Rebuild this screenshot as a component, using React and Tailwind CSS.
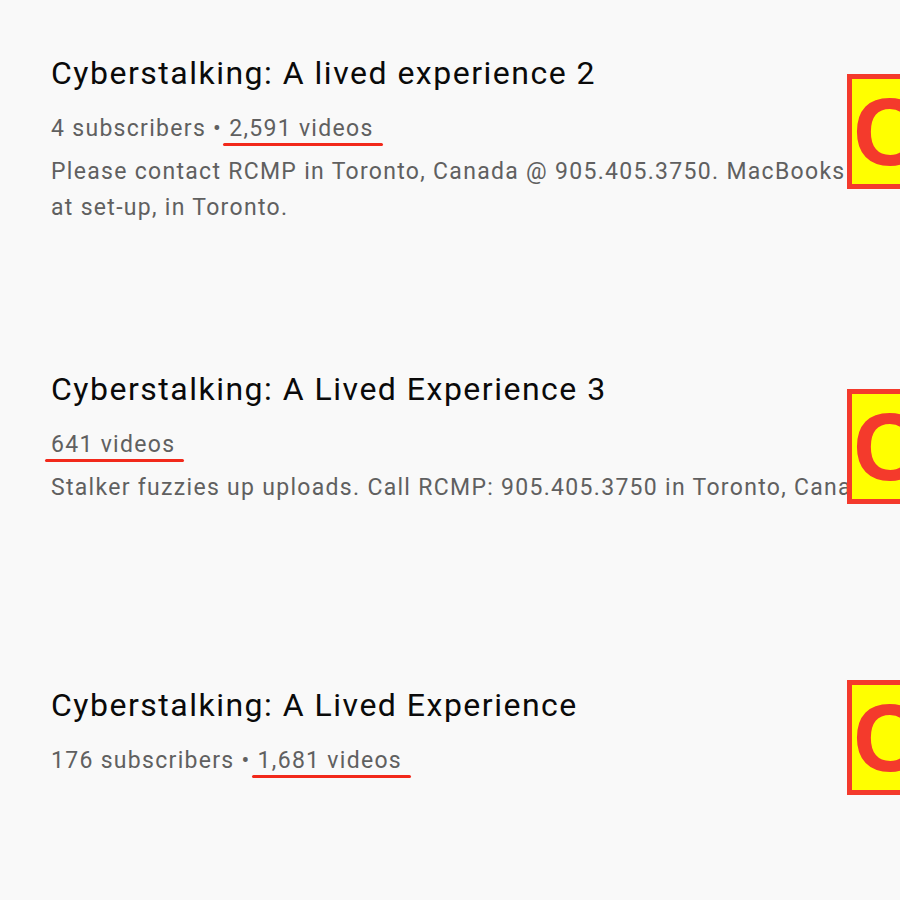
const rows = [
  {
    title: 'Cyberstalking: A lived experience 2',
    subs: '4 subscribers',
    videos: '2,591 videos',
    desc: ['Please contact RCMP in Toronto, Canada @ 905.405.3750. MacBooks', 'at set-up, in Toronto.'],
    thumbTop: 'mt-[74px]'
  },
  {
    title: 'Cyberstalking: A Lived Experience 3',
    videos: '641 videos',
    desc: ['Stalker fuzzies up uploads. Call RCMP: 905.405.3750 in Toronto, Canada'],
    thumbTop: 'mt-[73px]'
  },
  {
    title: 'Cyberstalking: A Lived Experience',
    subs: '176 subscribers',
    videos: '1,681 videos',
    desc: [],
    thumbTop: 'mt-[48px]'
  }
];

const Marked = ({ children }) => (
  <span className="relative inline-block">
    {children}
    <span className="absolute left-[-6px] right-[-9px] top-[32px] h-[3px] rounded-full bg-[#f2291b]" />
  </span>
);

const Thumb = ({ className }) => (
  <div className={`relative z-10 flex h-[115px] w-[180px] shrink-0 items-center border-[5px] border-[#f43a2c] bg-[#ffff00] pl-[1px] ${className}`}>
    <span className="font-['Liberation_Sans',Arial,sans-serif] text-[96px] font-bold leading-none text-[#f43a2c]">C</span>
  </div>
);

const App = () => {
  return (
    <div className="h-[900px] w-[900px] overflow-hidden bg-[#f9f9f9] font-['Roboto',sans-serif]">
      {rows.map((row) => (
        <div key={row.title} className="flex h-[316px] items-start">
          <div className="w-[847px] shrink-0 pl-[51px] pt-[53px]">
            <h3 className="text-[32px] leading-[40px] tracking-[1.5px] text-[#0a0a0a]">{row.title}</h3>
            <p className="mt-[18px] whitespace-nowrap text-[23px] leading-[36px] tracking-[1.3px] text-[#606060]">
              {row.subs && <span>{row.subs} • </span>}
              <Marked>{row.videos}</Marked>
            </p>
            {row.desc.length > 0 && (
              <p className="mt-[7px] whitespace-nowrap text-[23px] leading-[36px] tracking-[1.3px] text-[#606060]">
                {row.desc.map((line, idx) => (
                  <span key={idx} className="block">{line}</span>
                ))}
              </p>
            )}
          </div>
          <Thumb className={row.thumbTop} />
        </div>
      ))}
    </div>
  );
};

export default App;
